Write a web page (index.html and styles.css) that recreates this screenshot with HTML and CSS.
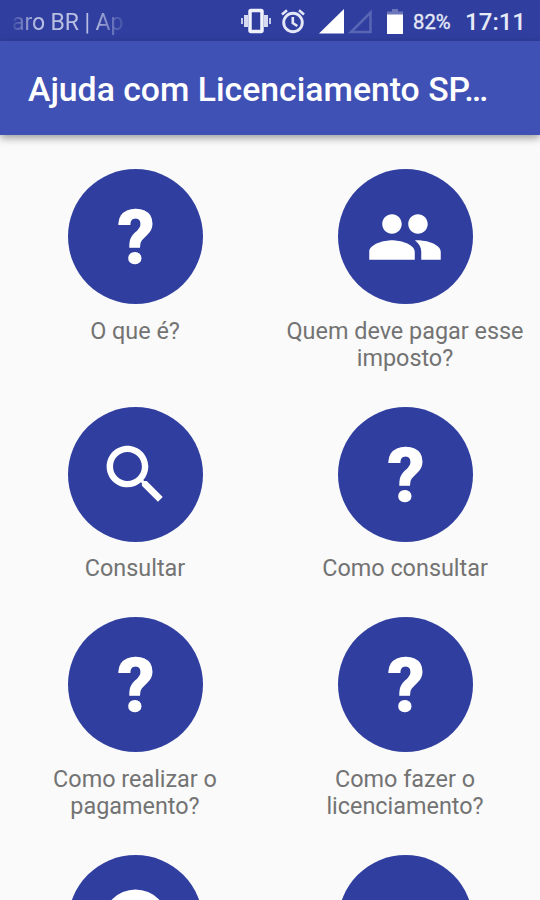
FILE: index.html
```
<!DOCTYPE html>
<html lang="pt-BR">
<head>
    <meta charset="UTF-8">
    <meta name="viewport" content="width=device-width, initial-scale=1.0">
    <title>Ajuda com Licenciamento SP</title>
    <link rel="stylesheet" href="styles.css">
</head>
<body>
    <div class="status-bar">
        <div class="carrier">aro BR | Ap</div>
        <svg class="icon-vibrate" width="32" height="26" viewBox="0 0 32 26">
            <path d="M2 10v6M30 10v6" stroke="#c3c8e6" stroke-width="2"/>
            <path d="M6 7v12M26 7v12" stroke="#d6daee" stroke-width="4"/>
            <rect x="10" y="2.500" width="12" height="21" rx="1" fill="none" stroke="#f0f2fb" stroke-width="3.500"/>
        </svg>
        <svg class="icon-alarm" width="26" height="26" viewBox="0 0 26 26">
            <circle cx="13" cy="14.500" r="9.300" fill="none" stroke="#e4e7f5" stroke-width="2.900"/>
            <path d="M12.800 9v6l4.500 3M2 6.500l5-4.200M24 6.500l-5-4.200" fill="none" stroke="#e4e7f5" stroke-width="2.600"/>
        </svg>
        <svg class="icon-signal" width="25" height="25" viewBox="0 0 25 25">
            <path d="M25 0v24.500H0z" fill="#fff"/>
        </svg>
        <svg class="icon-signal-empty" width="25" height="25" viewBox="0 0 25 25">
            <path d="M22.500 3.500v19.500H3z" fill="none" stroke="#5966b5" stroke-width="2.500"/>
        </svg>
        <svg class="icon-battery" width="16" height="25" viewBox="0 0 16 25">
            <path d="M5 0h6v2.500h5V6H0V2.500h5z" fill="#6c77bb"/>
            <path d="M0 5.500h16V25H0z" fill="#fff"/>
        </svg>
        <span class="battery-level">82%</span>
        <span class="clock">17:11</span>
    </div>

    <header class="app-bar">
        <h1>Ajuda com Licenciamento SP…</h1>
    </header>

    <main class="menu">
        <a class="item">
            <span class="circle question">?</span>
            <span class="label">O que é?</span>
        </a>
        <a class="item">
            <span class="circle">
                <svg width="78" height="78" viewBox="0 0 24 24" fill="#fff">
                    <path d="M16 11c1.660 0 2.990-1.340 2.990-3S17.660 5 16 5s-3 1.340-3 3 1.340 3 3 3zm-8 0c1.660 0 2.990-1.340 2.990-3S9.660 5 8 5 5 6.340 5 8s1.340 3 3 3zm0 2c-2.330 0-7 1.170-7 3.500V19h14v-2.500c0-2.330-4.670-3.500-7-3.500zm8 0c-.29 0-.62.02-.97.05 1.160.84 1.970 1.970 1.970 3.450V19h6v-2.500c0-2.330-4.670-3.500-7-3.500z"/>
                </svg>
            </span>
            <span class="label">Quem deve pagar esse imposto?</span>
        </a>
        <a class="item">
            <span class="circle">
                <svg width="77" height="77" viewBox="0 0 24 24" fill="#fff">
                    <path d="M15.500 14h-.79l-.28-.27C15.410 12.590 16 11.110 16 9.500 16 5.910 13.090 3 9.500 3S3 5.910 3 9.500 5.910 16 9.500 16c1.610 0 3.090-.59 4.230-1.570l.27.28v.79l5 4.990L20.490 19l-4.990-5zm-6 0C7.010 14 5 11.990 5 9.500S7.010 5 9.500 5 14 7.010 14 9.500 11.990 14 9.500 14z"/>
                </svg>
            </span>
            <span class="label">Consultar</span>
        </a>
        <a class="item">
            <span class="circle question">?</span>
            <span class="label">Como consultar</span>
        </a>
        <a class="item">
            <span class="circle question">?</span>
            <span class="label">Como realizar o pagamento?</span>
        </a>
        <a class="item">
            <span class="circle question">?</span>
            <span class="label">Como fazer o licenciamento?</span>
        </a>
        <a class="item">
            <span class="circle">
                <svg width="79" height="79" viewBox="0 0 24 24" fill="#fff">
                    <circle cx="12" cy="12" r="10"/>
                </svg>
            </span>
        </a>
        <a class="item">
            <span class="circle"></span>
        </a>
    </main>
</body>
</html>
```
FILE: styles.css
```
* {
    margin: 0;
    padding: 0;
    box-sizing: border-box;
}

body {
    font-family: Roboto, 'Noto Sans', sans-serif;
    background: #fafafa;
    width: 540px;
    height: 900px;
    overflow: hidden;
}

.status-bar {
    display: flex;
    align-items: center;
    height: 41px;
    padding: 1px 14px 0 12px;
    background: #303f9f;
    color: #e6e9f7;
    white-space: nowrap;
}

.status-bar svg {
    flex: none;
}

.carrier {
    width: 112px;
    margin-right: 116px;
    padding-top: 2px;
    font-size: 23px;
    letter-spacing: -0.1px;
    color: #b9bfe2;
    -webkit-mask-image: linear-gradient(90deg, rgba(0,0,0,0.1), #000 24px, #000 82px, rgba(0,0,0,0.2) 108px);
    mask-image: linear-gradient(90deg, rgba(0,0,0,0.1), #000 24px, #000 82px, rgba(0,0,0,0.2) 108px);
}

.icon-alarm {
    margin-left: 8px;
}

.icon-signal {
    margin-left: 13px;
}

.icon-signal-empty {
    margin-left: 4px;
}

.icon-battery {
    margin-left: 14px;
}

.battery-level {
    margin-left: 10px;
    padding-top: 1px;
    font-size: 20.3px;
    -webkit-text-stroke: 0.3px #e6e9f7;
}

.clock {
    margin-left: auto;
    padding-top: 2px;
    font-size: 24px;
    font-weight: 500;
}

.app-bar {
    position: relative;
    display: flex;
    align-items: center;
    height: 94px;
    padding: 2px 28px 0;
    background: #3f51b5;
    box-shadow: 0 3px 8px rgba(0,0,0,0.38);
}

.app-bar h1 {
    font-size: 33.75px;
    font-weight: 500;
    color: #fff;
    white-space: nowrap;
}

.menu {
    display: grid;
    grid-template-columns: 270px 270px;
    align-content: start;
    row-gap: 35px;
    height: 765px;
    padding-top: 34px;
    overflow: hidden;
}

.item {
    display: flex;
    flex-direction: column;
    align-items: center;
    gap: 13.5px;
}

.circle {
    display: flex;
    align-items: center;
    justify-content: center;
    width: 135px;
    height: 135px;
    border-radius: 50%;
    background: #303f9f;
}

.question {
    padding: 2px 0 0 2px;
    font-size: 74px;
    font-weight: 700;
    color: #fff;
    -webkit-text-stroke: 1.5px #fff;
}

.label {
    max-width: 240px;
    font-size: 23.4px;
    line-height: 27px;
    text-align: center;
    color: #737373;
}
```
